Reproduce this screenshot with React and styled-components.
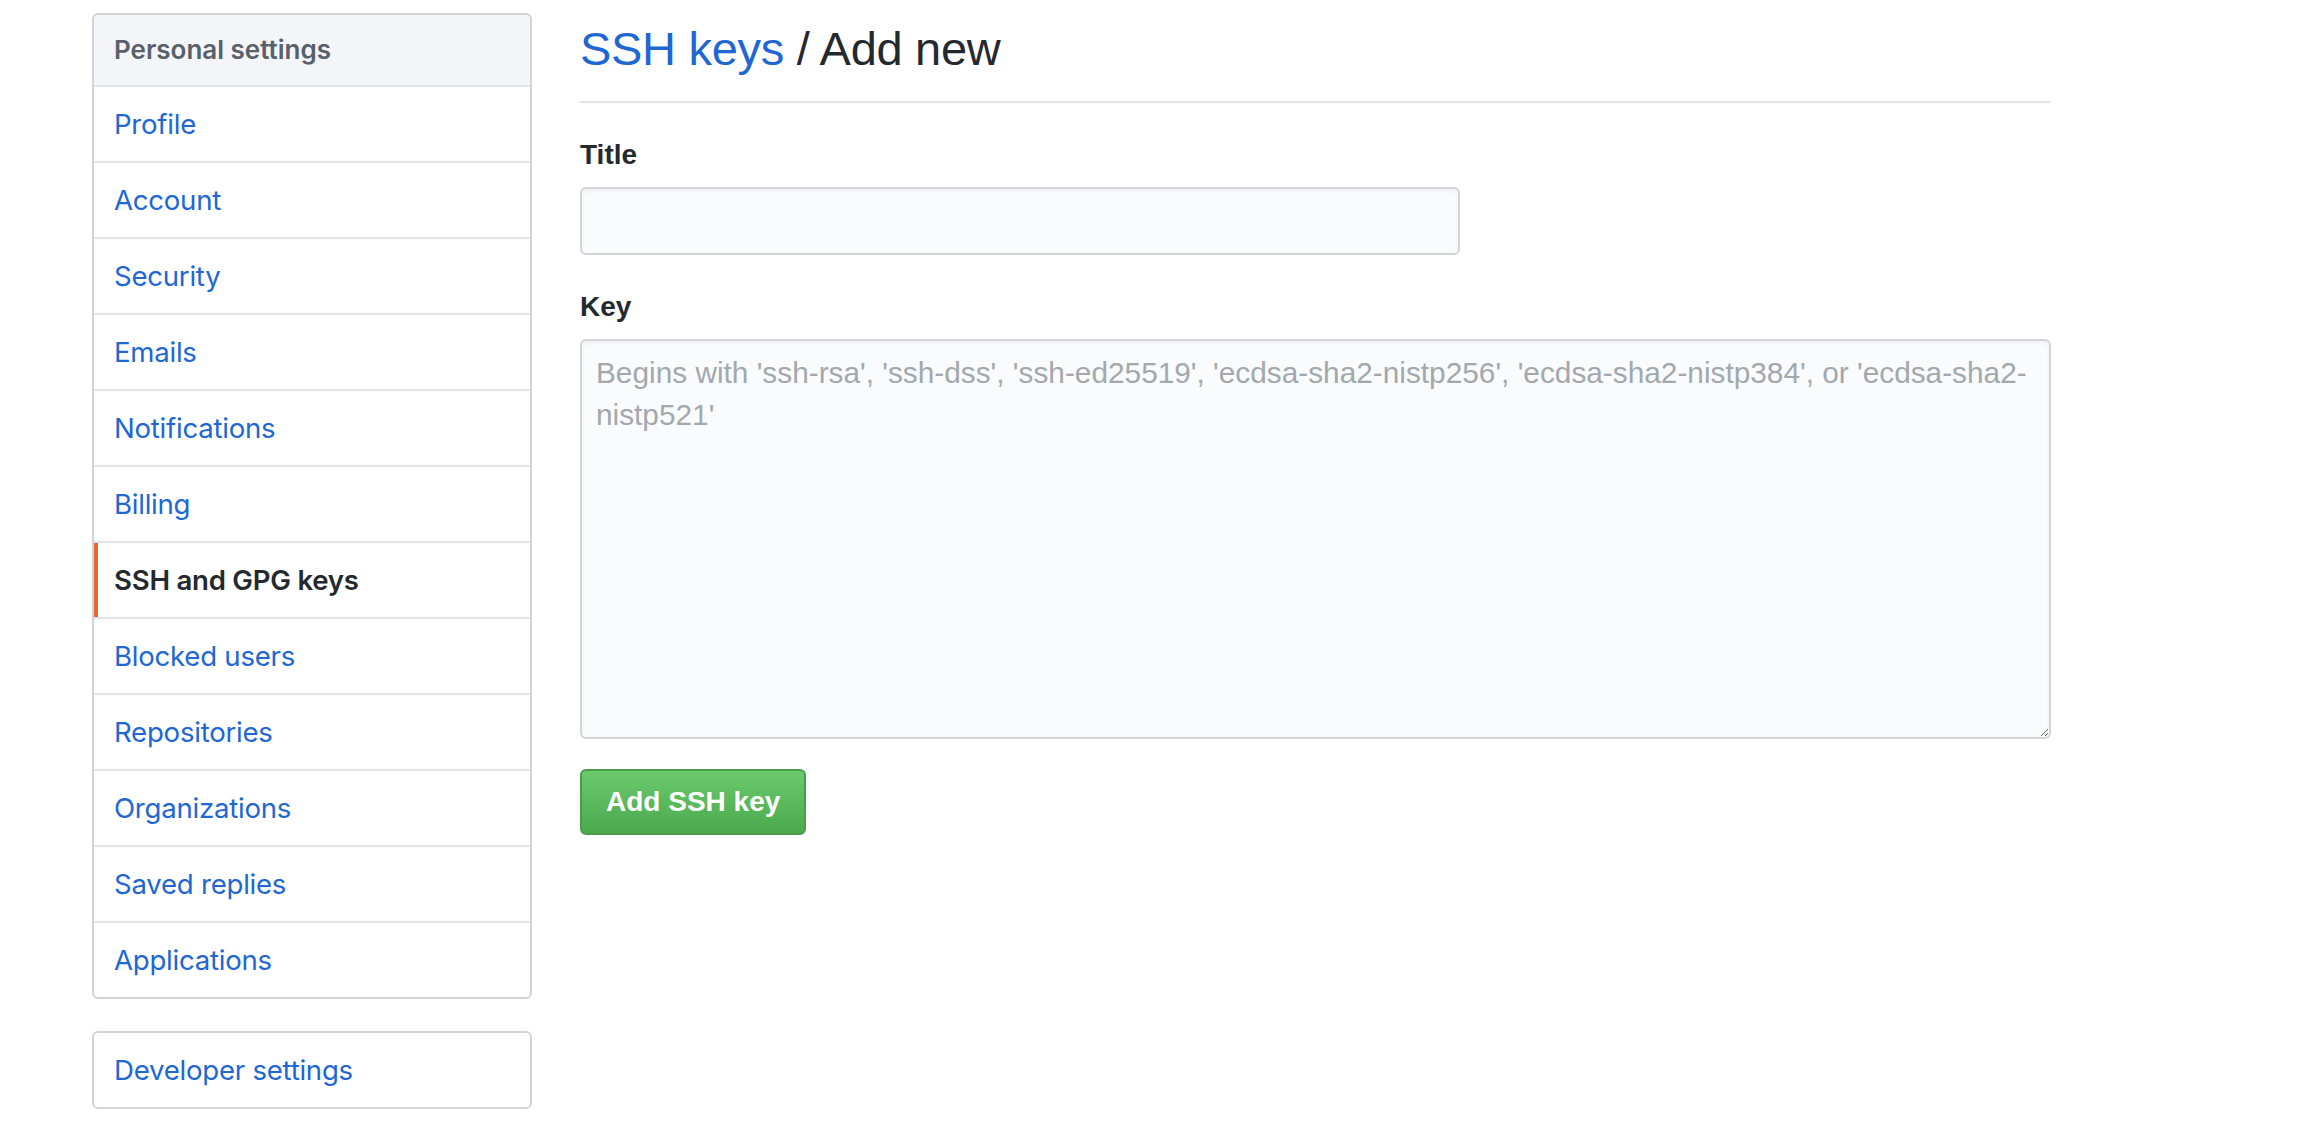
import React from 'react';
import styled, { createGlobalStyle } from 'styled-components';

const GlobalStyle = createGlobalStyle`
	html, body {
		margin: 0;
		padding: 0;
		background: #ffffff;
	}
	body {
		font-family: 'Liberation Sans', Arial, sans-serif;
		color: #24292e;
	}
`;

const Page = styled.div`
	display: grid;
	grid-template-columns: 440px 1471px;
	column-gap: 48px;
	align-items: start;
	padding: 13px 0 0 92px;
`;

const Sidebar = styled.nav`
	display: flex;
	flex-direction: column;
	gap: 32px;
`;

const Menu = styled.div`
	display: flex;
	flex-direction: column;
	border: 2px solid #d1d5da;
	border-radius: 6px;
	overflow: hidden;
	background: #ffffff;
`;

const MenuHeading = styled.div`
	padding: 14px 20px;
	line-height: 42px;
	font-family: Inter, 'Liberation Sans', sans-serif;
	font-size: 26px;
	font-weight: 600;
	color: #586069;
	background: #f3f5f8;
	border-bottom: 2px solid #e1e4e8;
`;

const MenuItem = styled.a`
	display: block;
	padding: 16px 20px;
	line-height: 42px;
	font-family: Inter, 'Liberation Sans', sans-serif;
	font-size: 27.6px;
	letter-spacing: -0.25px;
	text-decoration: none;
	cursor: pointer;
	color: ${(p) => (p.selected ? '#24292e' : '#2067d3')};
	font-weight: ${(p) => (p.selected ? 600 : 400)};
	box-shadow: ${(p) => (p.selected ? 'inset 4px 0 0 #e36a2e' : 'none')};
	border-bottom: 2px solid #e1e4e8;

	&:last-child {
		border-bottom: none;
	}
`;

const Main = styled.main`
	display: flex;
	flex-direction: column;
`;

const Subhead = styled.h1`
	margin: 0 0 31px;
	padding-bottom: 16px;
	border-bottom: 2px solid #e1e4e8;
	font-size: 47px;
	line-height: 72px;
	font-weight: 400;
	letter-spacing: -0.3px;
	color: #24292e;
`;

const HeadLink = styled.a`
	color: #2067d3;
	text-decoration: none;
`;

const FormGroup = styled.div`
	display: flex;
	flex-direction: column;
	margin-bottom: ${(p) => p.gap || 31}px;
`;

const Label = styled.label`
	font-size: 28px;
	line-height: 42px;
	font-weight: 700;
	margin-bottom: 11px;
	color: #24292e;
`;

const TextInput = styled.input`
	box-sizing: border-box;
	width: 880px;
	height: 68px;
	padding: 0 16px;
	font-family: 'Liberation Sans', Arial, sans-serif;
	font-size: 28px;
	background: #fafbfc;
	border: 2px solid #d1d5da;
	border-radius: 6px;
	box-shadow: inset 0 2px 4px rgba(27, 31, 35, 0.05);
	outline: none;
`;

const KeyArea = styled.textarea`
	box-sizing: border-box;
	width: 100%;
	height: 400px;
	padding: 11px 14px;
	font-family: 'Liberation Sans', Arial, sans-serif;
	font-size: 29.8px;
	line-height: 42px;
	background: #fafbfc;
	border: 2px solid #d1d5da;
	border-radius: 6px;
	box-shadow: inset 0 2px 4px rgba(27, 31, 35, 0.05);
	outline: none;
	resize: vertical;

	&::placeholder {
		color: #a3a8ae;
	}
`;

const SubmitButton = styled.button`
	align-self: flex-start;
	height: 66px;
	padding: 0 24px;
	font-family: 'Liberation Sans', Arial, sans-serif;
	font-size: 28px;
	font-weight: 700;
	color: #ffffff;
	background: linear-gradient(180deg, #6bca6d 0%, #4ca94d 100%);
	border: 2px solid #4a9c4b;
	border-radius: 6px;
	cursor: pointer;
`;

const personalItems = [
	'Profile',
	'Account',
	'Security',
	'Emails',
	'Notifications',
	'Billing',
	'SSH and GPG keys',
	'Blocked users',
	'Repositories',
	'Organizations',
	'Saved replies',
	'Applications',
];

function App() {
	return (
		<>
			<GlobalStyle />
			<Page>
				<Sidebar>
					<Menu>
						<MenuHeading>Personal settings</MenuHeading>
						{personalItems.map((item) => (
							<MenuItem key={item} selected={item === 'SSH and GPG keys'}>
								{item}
							</MenuItem>
						))}
					</Menu>
					<Menu>
						<MenuItem>Developer settings</MenuItem>
					</Menu>
				</Sidebar>
				<Main>
					<Subhead>
						<HeadLink>SSH keys</HeadLink> / Add new
					</Subhead>
					<FormGroup>
						<Label htmlFor='key-title'>Title</Label>
						<TextInput id='key-title' type='text' />
					</FormGroup>
					<FormGroup gap={30}>
						<Label htmlFor='key-body'>Key</Label>
						<KeyArea
							id='key-body'
							placeholder="Begins with 'ssh-rsa', 'ssh-dss', 'ssh-ed25519', 'ecdsa-sha2-nistp256', 'ecdsa-sha2-nistp384', or 'ecdsa-sha2-nistp521'"
						/>
					</FormGroup>
					<SubmitButton type='button'>Add SSH key</SubmitButton>
				</Main>
			</Page>
		</>
	);
}

export default App;
